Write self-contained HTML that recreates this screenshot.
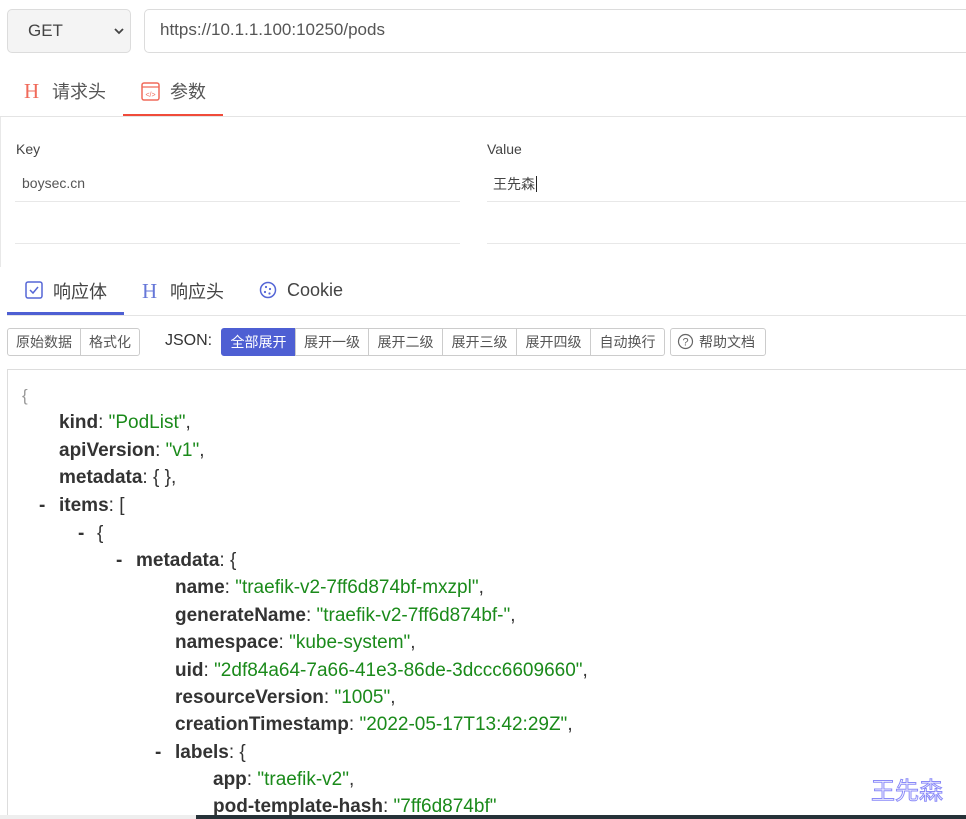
<!DOCTYPE html>
<html><head><meta charset="utf-8"><style>
body{margin:0;width:966px;height:819px;overflow:hidden;background:#fff;font-family:"Liberation Sans","Noto Sans CJK SC",sans-serif;position:relative}
.a{position:absolute;white-space:nowrap}
.sel{left:7px;top:9px;width:124px;height:44px;box-sizing:border-box;border:1px solid #dcdcdc;border-radius:5px;background:#f4f4f4}
.url{left:144px;top:9px;width:840px;height:44px;box-sizing:border-box;border:1px solid #dcdcdc;border-radius:5px}
.btn{position:absolute;top:328px;height:28px;box-sizing:border-box;border:1px solid #ccc;font-size:14px;color:#555;line-height:26px;text-align:center}
.j{position:absolute;font-size:19px;color:#333;white-space:nowrap;line-height:22px}
.j b{font-weight:bold;color:#333}
.s{color:#1a8a1a}
</style></head><body>
<div class="a sel"></div>
<div class="a" style="left:28px;top:21px;font-size:17px;color:#444">GET</div>
<svg class="a" style="left:113px;top:27px" width="12" height="8"><path d="M2 2l4 4 4-4" stroke="#444" stroke-width="1.8" fill="none"/></svg>
<div class="a url"></div>
<div class="a" style="left:160px;top:20px;font-size:17px;color:#555">https://10.1.1.100:10250/pods</div>

<div class="a" style="left:24px;top:79px;font-size:21px;color:#f06a5a;font-family:'Liberation Serif',serif">H</div>
<div class="a" style="left:52px;top:78px;font-size:18px;color:#555">请求头</div>
<svg class="a" style="left:141px;top:82px" width="19" height="19"><rect x="1" y="1" width="17" height="17" rx="2" fill="none" stroke="#f06a5a" stroke-width="1.5"/><line x1="1" y1="5" x2="18" y2="5" stroke="#f06a5a" stroke-width="1.3"/><text x="9.5" y="15" font-size="7" fill="#f06a5a" text-anchor="middle" font-family="Liberation Sans">&lt;/&gt;</text></svg>
<div class="a" style="left:170px;top:78px;font-size:18px;color:#555">参数</div>
<div class="a" style="left:123px;top:114px;width:100px;height:2px;background:#f04b3a"></div>
<div class="a" style="left:0;top:116px;width:966px;height:1px;background:#e4e4e4"></div>
<div class="a" style="left:0;top:117px;width:1px;height:150px;background:#e8e8e8"></div>

<div class="a" style="left:16px;top:141px;font-size:14px;color:#444">Key</div>
<div class="a" style="left:487px;top:141px;font-size:14px;color:#444">Value</div>
<div class="a" style="left:22px;top:175px;font-size:14px;color:#555">boysec.cn</div>
<div class="a" style="left:493px;top:174px;font-size:14px;color:#444">王先森<span style="border-left:1px solid #222;margin-left:1px"></span></div>
<div class="a" style="left:15px;top:201px;width:445px;height:1px;background:#e8e8e8"></div>
<div class="a" style="left:487px;top:201px;width:479px;height:1px;background:#e8e8e8"></div>
<div class="a" style="left:15px;top:243px;width:445px;height:1px;background:#e8e8e8"></div>
<div class="a" style="left:487px;top:243px;width:479px;height:1px;background:#e8e8e8"></div>

<svg class="a" style="left:25px;top:281px" width="18" height="18"><rect x="1" y="1" width="16" height="16" rx="2" fill="none" stroke="#5566d6" stroke-width="1.5"/><path d="M5 9l3 3 5-6" stroke="#5566d6" stroke-width="1.5" fill="none"/></svg>
<div class="a" style="left:53px;top:278px;font-size:18px;color:#444">响应体</div>
<div class="a" style="left:142px;top:279px;font-size:21px;color:#6677d8;font-family:'Liberation Serif',serif">H</div>
<div class="a" style="left:170px;top:278px;font-size:18px;color:#444">响应头</div>
<svg class="a" style="left:259px;top:281px" width="18" height="18"><circle cx="9" cy="9" r="7.5" fill="none" stroke="#5566d6" stroke-width="1.5"/><circle cx="7" cy="6" r="1.1" fill="#5566d6"/><circle cx="11" cy="8" r="1.1" fill="#5566d6"/><circle cx="6" cy="11" r="1.1" fill="#5566d6"/><circle cx="10.5" cy="12.5" r="1.1" fill="#5566d6"/></svg>
<div class="a" style="left:287px;top:280px;font-size:18px;color:#444">Cookie</div>
<div class="a" style="left:7px;top:312px;width:117px;height:3px;background:#4e5fd3"></div>
<div class="a" style="left:7px;top:315px;width:959px;height:1px;background:#e4e4e4"></div>

<div class="btn" style="left:7px;width:74px;border-radius:3px 0 0 3px">原始数据</div>
<div class="btn" style="left:80px;width:60px;border-radius:0 3px 3px 0">格式化</div>
<div class="a" style="left:165px;top:332px;font-size:16px;color:#333">JSON:</div>
<div class="btn" style="left:221px;width:75px;background:#4e5fd3;border-color:#4e5fd3;color:#fff;border-radius:3px 0 0 3px">全部展开</div>
<div class="btn" style="left:295px;width:74px">展开一级</div>
<div class="btn" style="left:368px;width:75px">展开二级</div>
<div class="btn" style="left:442px;width:75px">展开三级</div>
<div class="btn" style="left:516px;width:75px">展开四级</div>
<div class="btn" style="left:590px;width:75px;border-radius:0 3px 3px 0">自动换行</div>
<div class="btn" style="left:670px;width:96px;border-radius:3px;padding-left:18px">帮助文档</div>
<svg class="a" style="left:677px;top:333px" width="17" height="17"><circle cx="8.5" cy="8.5" r="7" fill="none" stroke="#666" stroke-width="1.2"/><text x="8.5" y="12.5" font-size="11" fill="#666" text-anchor="middle" font-family="Liberation Sans">?</text></svg>

<div class="a" style="left:7px;top:369px;width:959px;height:1px;background:#ddd"></div>
<div class="a" style="left:7px;top:369px;width:1px;height:450px;background:#ddd"></div>

<div class="j" style="left:22px;top:385px;color:#999;font-size:17px">{</div>
<div class="j" style="left:59px;top:412px"><b>kind</b>: <span class="s">"PodList"</span>,</div>
<div class="j" style="left:59px;top:440px"><b>apiVersion</b>: <span class="s">"v1"</span>,</div>
<div class="j" style="left:59px;top:467px"><b>metadata</b>: { },</div>
<div class="j" style="left:39px;top:495px"><b>-</b></div>
<div class="j" style="left:59px;top:495px"><b>items</b>: [</div>
<div class="j" style="left:78px;top:523px"><b>-</b></div>
<div class="j" style="left:97px;top:523px">{</div>
<div class="j" style="left:116px;top:550px"><b>-</b></div>
<div class="j" style="left:136px;top:550px"><b>metadata</b>: {</div>
<div class="j" style="left:175px;top:577px"><b>name</b>: <span class="s">"traefik-v2-7ff6d874bf-mxzpl"</span>,</div>
<div class="j" style="left:175px;top:605px"><b>generateName</b>: <span class="s">"traefik-v2-7ff6d874bf-"</span>,</div>
<div class="j" style="left:175px;top:632px"><b>namespace</b>: <span class="s">"kube-system"</span>,</div>
<div class="j" style="left:175px;top:660px"><b>uid</b>: <span class="s">"2df84a64-7a66-41e3-86de-3dccc6609660"</span>,</div>
<div class="j" style="left:175px;top:687px"><b>resourceVersion</b>: <span class="s">"1005"</span>,</div>
<div class="j" style="left:175px;top:714px"><b>creationTimestamp</b>: <span class="s">"2022-05-17T13:42:29Z"</span>,</div>
<div class="j" style="left:155px;top:742px"><b>-</b></div>
<div class="j" style="left:175px;top:742px"><b>labels</b>: {</div>
<div class="j" style="left:213px;top:769px"><b>app</b>: <span class="s">"traefik-v2"</span>,</div>
<div class="j" style="left:213px;top:796px"><b>pod-template-hash</b>: <span class="s">"7ff6d874bf"</span></div>

<div class="a" style="left:871px;top:771px;font-size:24px;color:#fff;-webkit-text-stroke:1px #8a8af8;font-family:'Noto Sans CJK SC',sans-serif">王先森</div>

<div class="a" style="left:0;top:815px;width:196px;height:4px;background:#eee"></div>
<div class="a" style="left:196px;top:815px;width:770px;height:4px;background:#263238"></div>
</body></html>
